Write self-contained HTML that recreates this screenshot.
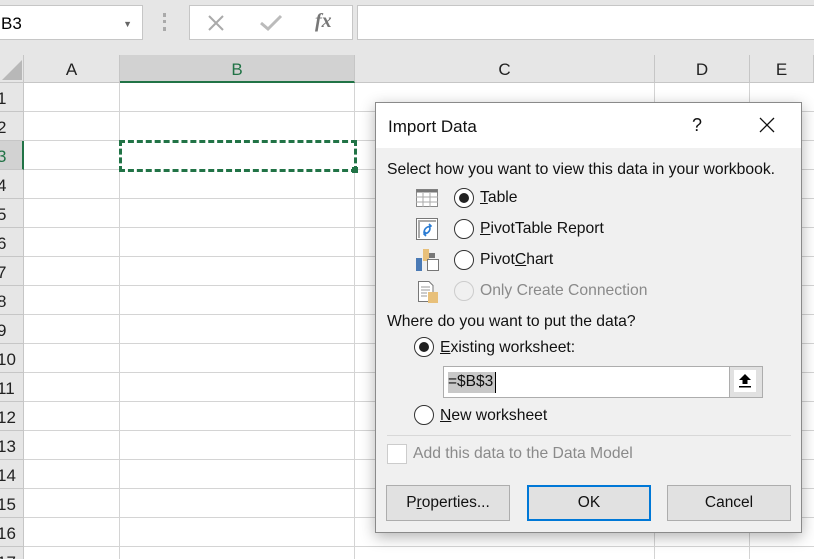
<!DOCTYPE html>
<html><head><style>
*{margin:0;padding:0;box-sizing:border-box}
html,body{width:814px;height:559px;overflow:hidden}
body{position:relative;background:#fff;font-family:"Liberation Sans",sans-serif;}
.abs{position:absolute}
.tb{left:0;top:0;width:814px;height:55px;background:#e6e6e6}
.box{background:#fff;border:1px solid #c6c6c6}
.colh{top:55px;height:28px;background:#e6e6e6;border-right:1px solid #c6c6c6;border-bottom:1px solid #c6c6c6;font-size:17px;text-align:center;line-height:30px;color:#222}
.rowh{left:0;width:24px;height:29px;background:#e6e6e6;border-bottom:1px solid #c6c6c6;border-right:1px solid #c6c6c6;font-size:17px;line-height:32px;color:#222;text-indent:-3px;overflow:hidden}
.vl{top:83px;width:1px;height:476px;background:#d4d4d4}
.hl{left:24px;width:790px;height:1px;background:#d4d4d4}
.dlg{left:375px;top:102px;width:427px;height:431px;background:#f0f0f0;border:1px solid #8a8a8a;box-shadow:0 4px 14px rgba(0,0,0,.3);font-family:"Liberation Sans",sans-serif;font-size:15.7px;color:#111}
.radio{width:20px;height:20px;border:1px solid #333;border-radius:50%;background:#fff}
.radio.on::after{content:"";position:absolute;left:4px;top:4px;width:10px;height:10px;border-radius:50%;background:#222}
.btn{height:36px;border:1px solid #adadad;background:#e1e1e1;text-align:center;line-height:34px;font-size:15.5px}
</style></head><body>
<div class="abs tb"></div>
<div class="abs box" style="left:-2px;top:5px;width:145px;height:35px;font-size:17px;line-height:35px;padding-left:2px">B3<span style="position:absolute;right:10px;top:1px;font-size:9px;color:#666">▼</span></div>
<div class="abs" style="left:163px;top:13px;width:3px;height:18px;border-left:3px dotted #aaa"></div>
<div class="abs box" style="left:189px;top:5px;width:164px;height:35px"></div>
<svg class="abs" style="left:207px;top:14px" width="18" height="18"><path d="M2 2L16 16M16 2L2 16" stroke="#aaa" stroke-width="2"/></svg>
<svg class="abs" style="left:259px;top:14px" width="24" height="18"><path d="M2 9L9 15L22 2" stroke="#bbb" stroke-width="3" fill="none"/></svg>
<div class="abs" style="left:315px;top:10px;font-size:20px;color:#777;font-family:'Liberation Serif',serif;font-style:italic;font-weight:bold">fx</div>
<div class="abs box" style="left:357px;top:5px;width:470px;height:35px"></div>

<div class="abs" style="left:0;top:55px;width:24px;height:28px;background:#e6e6e6;border-right:1px solid #c6c6c6;border-bottom:1px solid #c6c6c6"></div>
<svg class="abs" style="left:2px;top:60px" width="20" height="20"><polygon points="20,0 20,20 0,20" fill="#b8b8b8"/></svg>
<div class="abs colh" style="left:24px;width:96px">A</div>
<div class="abs colh" style="left:120px;width:235px;background:#d2d2d2;color:#217346;border-bottom:2px solid #217346">B</div>
<div class="abs colh" style="left:355px;width:300px">C</div>
<div class="abs colh" style="left:655px;width:95px">D</div>
<div class="abs colh" style="left:750px;width:64px">E</div>

<div class="abs vl" style="left:119px"></div>
<div class="abs vl" style="left:354px"></div>
<div class="abs vl" style="left:654px"></div>
<div class="abs vl" style="left:749px"></div>

<div class="abs rowh" style="top:83px">1</div><div class="abs hl" style="top:111px"></div>
<div class="abs rowh" style="top:112px">2</div><div class="abs hl" style="top:140px"></div>
<div class="abs rowh" style="top:141px;background:#d2d2d2;color:#217346;border-right:2px solid #217346">3</div><div class="abs hl" style="top:169px"></div>
<div class="abs rowh" style="top:170px">4</div><div class="abs hl" style="top:198px"></div>
<div class="abs rowh" style="top:199px">5</div><div class="abs hl" style="top:227px"></div>
<div class="abs rowh" style="top:228px">6</div><div class="abs hl" style="top:256px"></div>
<div class="abs rowh" style="top:257px">7</div><div class="abs hl" style="top:285px"></div>
<div class="abs rowh" style="top:286px">8</div><div class="abs hl" style="top:314px"></div>
<div class="abs rowh" style="top:315px">9</div><div class="abs hl" style="top:343px"></div>
<div class="abs rowh" style="top:344px">10</div><div class="abs hl" style="top:372px"></div>
<div class="abs rowh" style="top:373px">11</div><div class="abs hl" style="top:401px"></div>
<div class="abs rowh" style="top:402px">12</div><div class="abs hl" style="top:430px"></div>
<div class="abs rowh" style="top:431px">13</div><div class="abs hl" style="top:459px"></div>
<div class="abs rowh" style="top:460px">14</div><div class="abs hl" style="top:488px"></div>
<div class="abs rowh" style="top:489px">15</div><div class="abs hl" style="top:517px"></div>
<div class="abs rowh" style="top:518px">16</div><div class="abs hl" style="top:546px"></div>
<div class="abs rowh" style="top:547px">17</div>

<div class="abs" style="left:119px;top:140px;width:238px;height:32px;border:3px dashed #217346;background:#fff;outline:1px solid #fff;outline-offset:-4px"></div>
<div class="abs" style="left:352px;top:167px;width:6px;height:6px;background:#217346"></div>

<div class="abs dlg">
 <div class="abs" style="left:0;top:0;width:425px;height:45px;background:#fff"></div>
 <div class="abs" style="left:12px;top:14px;font-size:17px">Import Data</div>
 <div class="abs" style="left:316px;top:12px;font-size:18px">?</div>
 <svg class="abs" style="left:383px;top:14px" width="16" height="16"><path d="M1 1L15 15M15 1L1 15" stroke="#111" stroke-width="1.3"/></svg>
 <div class="abs" style="left:11px;top:58px">Select how you want to view this data in your workbook.</div>
 <svg class="abs" style="left:40px;top:86px" width="22" height="18"><rect x="0.5" y="0.5" width="21" height="17" fill="#fff" stroke="#888"/><rect x="0.5" y="0.5" width="21" height="3" fill="#777"/><path d="M7 4V18M14 4V18M0 8H22M0 13H22" stroke="#aaa"/></svg>
 <div class="abs radio on" style="left:78px;top:85px"></div>
 <div class="abs" style="left:104px;top:86px"><u>T</u>able</div>
 <svg class="abs" style="left:40px;top:115px" width="22" height="22"><rect x="0.5" y="0.5" width="21" height="21" fill="#fff" stroke="#777"/><rect x="2" y="2" width="2" height="18" fill="#aaa"/><rect x="2" y="2" width="18" height="2" fill="#aaa"/><path d="M8 15Q8 9 15 8M13 6l2 2-2 2M14 10Q14 15 8 16M10 14l-2 2 2 2" stroke="#2b7cd3" stroke-width="1.6" fill="none"/></svg>
 <div class="abs radio" style="left:78px;top:116px"></div>
 <div class="abs" style="left:104px;top:117px"><u>P</u>ivotTable Report</div>
 <svg class="abs" style="left:40px;top:145px" width="24" height="24"><rect x="0" y="10" width="6" height="13" fill="#4a7ab5"/><rect x="7" y="1" width="6" height="12" fill="#e8c07a"/><rect x="13" y="5" width="6" height="5" fill="#777"/><rect x="11.5" y="11.5" width="11" height="11" fill="#fff" stroke="#777"/></svg>
 <div class="abs radio" style="left:78px;top:147px"></div>
 <div class="abs" style="left:104px;top:148px">Pivot<u>C</u>hart</div>
 <svg class="abs" style="left:40px;top:177px" width="24" height="24"><path d="M2.5 1.5H13l4 4V21.5H2.5Z" fill="#fff" stroke="#777"/><path d="M5 7H14M5 10H14M5 13H11M5 16H11" stroke="#999"/><rect x="12" y="12" width="10" height="11" fill="#e8c07a"/></svg>
 <div class="abs radio" style="left:78px;top:178px;border-color:#ccc;background:#f0f0f0"></div>
 <div class="abs" style="left:104px;top:179px;color:#8a8a8a">Only Create Connection</div>
 <div class="abs" style="left:11px;top:210px">Where do you want to put the data?</div>
 <div class="abs radio on" style="left:38px;top:234px"></div>
 <div class="abs" style="left:64px;top:236px"><u>E</u>xisting worksheet:</div>
 <div class="abs" style="left:67px;top:263px;width:320px;height:32px;border:1px solid #adadad;background:#fff"></div>
 <div class="abs" style="left:72px;top:269px;height:21px;width:47px;background:#c8c8c8"></div>
 <div class="abs" style="left:72px;top:270px;font-size:15.5px">=$B$3</div>
 <div class="abs" style="left:119px;top:269px;width:1px;height:21px;background:#000"></div>
 <div class="abs" style="left:353px;top:264px;width:33px;height:30px;background:#e1e1e1;border-left:1px solid #adadad"></div>
 <div class="abs" style="left:358px;top:267px;width:22px;height:22px;background:#fff"></div>
 <svg class="abs" style="left:361px;top:270px" width="16" height="16"><path d="M8 1L2 7H5.5V11H10.5V7H14Z" fill="#000"/><rect x="2" y="13" width="12" height="1.5" fill="#000"/></svg>
 <div class="abs radio" style="left:38px;top:302px"></div>
 <div class="abs" style="left:64px;top:304px"><u>N</u>ew worksheet</div>
 <div class="abs" style="left:11px;top:332px;width:404px;height:1px;background:#d8d8d8"></div>
 <div class="abs" style="left:11px;top:341px;width:20px;height:20px;border:1px solid #ccc;background:#fff"></div>
 <div class="abs" style="left:37px;top:342px;color:#8a8a8a">Add this data to the Data Model</div>
 <div class="abs btn" style="left:10px;top:382px;width:124px">P<u>r</u>operties...</div>
 <div class="abs btn" style="left:151px;top:382px;width:124px;border:2px solid #0078d7;line-height:32px">OK</div>
 <div class="abs btn" style="left:291px;top:382px;width:124px">Cancel</div>
</div>
</body></html>
